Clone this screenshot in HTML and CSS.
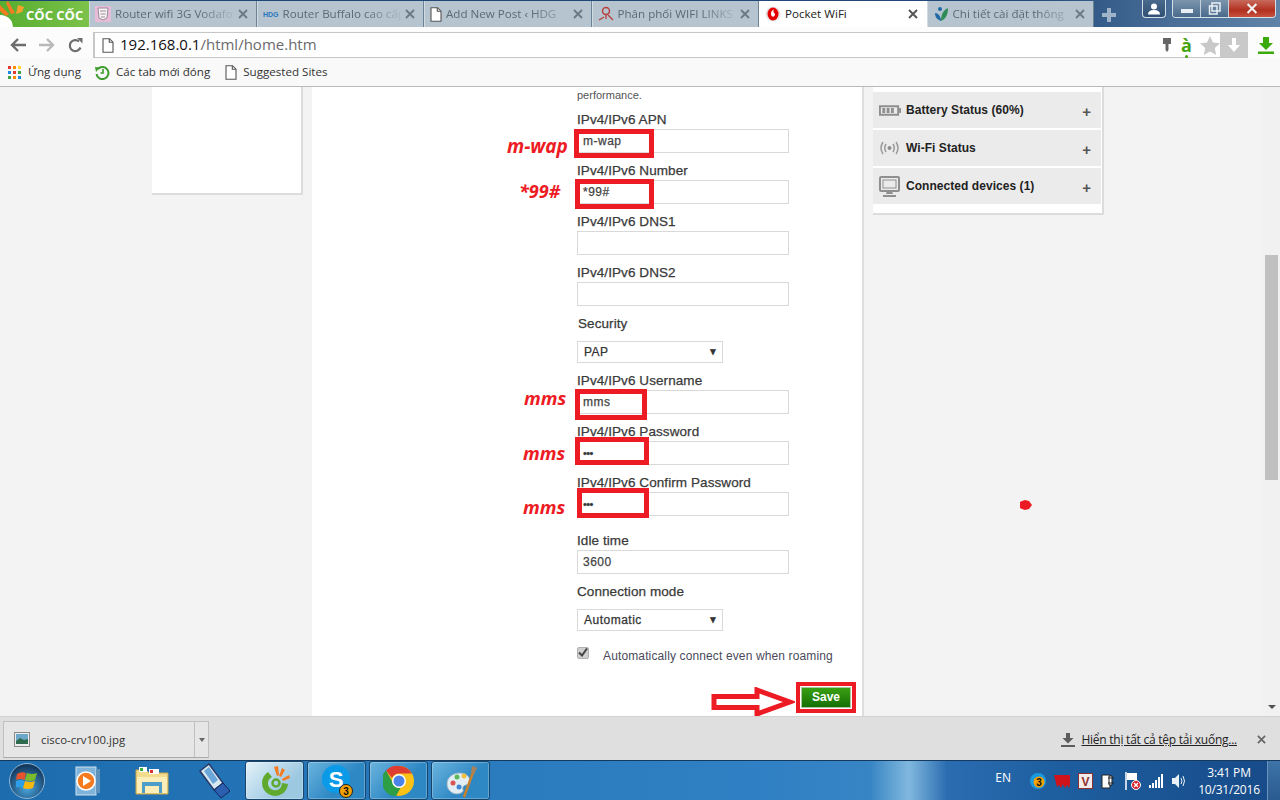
FILE: index.html
```html
<!DOCTYPE html>
<html lang="vi">
<head>
<meta charset="utf-8">
<title>Pocket WiFi</title>
<link rel="stylesheet" href="styles.css">
</head>
<body>
<svg class="defs" width="0" height="0" aria-hidden="true">
  <symbol id="x" viewBox="0 0 10 10"><path d="M1 1l8 8M9 1l-8 8" stroke="currentColor" stroke-width="1.900" fill="none"/></symbol>
  <symbol id="doc" viewBox="0 0 12 15"><path d="M1 .7h6.500L11 4.200v10.100H1z" fill="#fff" stroke="#555" stroke-width="1.100"/><path d="M7.300.7v3.600H11" fill="none" stroke="#555" stroke-width="1.100"/></symbol>
</svg>

<div class="app">
  <header class="titlebar">
    <div class="logo">
      <svg width="24" height="27" viewBox="0 0 24 27"><path d="M0 27V15C5 15 9 17 12 22l1 5z" fill="#fff"/><path d="M0 5l9 9-3 2L0 11z" fill="#f47b20"/><path d="M8 1l7 12-4 1L6 3z" fill="#f47b20"/><path d="M18 5l-2 9 6 -2 2-5z" fill="#f9a02a"/></svg>
      <span class="logo-text">CỐC CỐC</span>
    </div>
    <div class="tab">
      <svg class="fav" width="16" height="16" viewBox="0 0 16 16"><rect width="16" height="16" fill="#e8bcd8"/><path d="M3 2h10l-1 10-4 2-4-2z" fill="#f8f4f6" stroke="#9a8a96"/><path d="M5 5h6M5.500 8h5M6 11h4" stroke="#9a8a96"/></svg>
      <span class="tab-title">Router wifi 3G Vodafo</span>
      <svg class="close" width="10" height="10"><use href="#x"/></svg>
    </div>
    <div class="tab">
      <svg class="fav" width="16" height="16" viewBox="0 0 16 16"><text x="0" y="11" class="hdg">HDG</text></svg>
      <span class="tab-title">Router Buffalo cao cấp</span>
      <svg class="close" width="10" height="10"><use href="#x"/></svg>
    </div>
    <div class="tab">
      <svg class="fav" width="12" height="15"><use href="#doc"/></svg>
      <span class="tab-title">Add New Post ‹ HDG</span>
      <svg class="close" width="10" height="10"><use href="#x"/></svg>
    </div>
    <div class="tab">
      <svg class="fav" width="16" height="16" viewBox="0 0 16 16"><circle cx="8" cy="5" r="3.500" fill="none" stroke="#b8413f" stroke-width="1.500"/><path d="M8 8v5M1 14l5-3M10 9l5 5" stroke="#b8413f" stroke-width="1.300"/></svg>
      <span class="tab-title">Phân phối WIFI LINKS</span>
      <svg class="close" width="10" height="10"><use href="#x"/></svg>
    </div>
    <div class="tab tab-active">
      <svg class="fav" width="16" height="16" viewBox="0 0 16 16"><circle cx="8" cy="8" r="7.500" fill="#e4e4e4"/><ellipse cx="8" cy="8" rx="5.500" ry="6.500" fill="#e60000"/><path d="M9 3.500c-2 .6-3 2.300-3 4.200 0 1.800 1 3 2 3s2-1 2-2.200c0-1.300-1.200-1.800-1.600-2.500C8.300 5 8.600 4.200 9 3.500z" fill="#fff"/></svg>
      <span class="tab-title">Pocket WiFi</span>
      <svg class="close" width="10" height="10"><use href="#x"/></svg>
    </div>
    <div class="tab">
      <svg class="fav" width="16" height="16" viewBox="0 0 16 16"><path d="M8 15C3 13 2 10 2 7c3 0 6 3 6 8z" fill="#1f6aa5"/><path d="M8 15c0-6 2-11 7-13 0 6-2 11-7 13z" fill="#2e8b57"/><circle cx="7" cy="3" r="2" fill="#1f6aa5"/></svg>
      <span class="tab-title">Chi tiết cài đặt thông</span>
      <svg class="close" width="10" height="10"><use href="#x"/></svg>
    </div>
    <svg class="newtab" width="18" height="18" viewBox="0 0 18 18"><path d="M9 2v14M2 9h14" stroke="#9fb4c8" stroke-width="4"/></svg>
    <div class="winctl">
      <div class="winbtn-user">
        <svg width="14" height="12" viewBox="0 0 14 12"><circle cx="7" cy="3.500" r="3" fill="#fff"/><path d="M1 11.500c0-3 2-4.500 6-4.500s6 1.500 6 4.500z" fill="#fff"/></svg>
      </div>
      <div class="wingroup">
        <div class="winbtn-min"><span class="min-bar"></span></div>
        <div class="winbtn-max"><svg width="13" height="13" viewBox="0 0 13 13"><path d="M4 1h8v8h-8zM1.500 4h7.500v8h-7.500z" fill="none" stroke="#e8eef4" stroke-width="1.500"/></svg></div>
        <div class="winbtn-close"><svg width="16" height="11"><use href="#x" /></svg></div>
      </div>
    </div>
  </header>

  <nav class="toolbar">
    <svg class="nav-icon" width="16" height="14" viewBox="0 0 16 14"><path d="M8 1L2 7l6 6M2 7h14" stroke="#6d6d6d" stroke-width="2.400" fill="none"/></svg>
    <svg class="nav-icon" width="16" height="14" viewBox="0 0 16 14"><path d="M8 1l6 6-6 6M14 7H0" stroke="#b9b9b9" stroke-width="2.400" fill="none"/></svg>
    <svg class="nav-icon nav-reload" width="15" height="15" viewBox="0 0 15 15"><path d="M12.500 9.500A5.500 5.500 0 1 1 11 3.500" stroke="#6d6d6d" stroke-width="2.200" fill="none"/><path d="M9 0h5.500v5.500z" fill="#6d6d6d"/></svg>
    <div class="omnibox">
      <svg class="url-doc" width="12" height="15"><use href="#doc"/></svg>
      <span class="url"><b class="url-host">192.168.0.1</b>/html/home.htm</span>
      <svg class="o-key" width="10" height="16" viewBox="0 0 10 16"><path d="M1 1h8v6H6.500v6L5 15l-1.500-2V7H1z" fill="#666"/></svg>
      <span class="o-a">à<i class="o-dot"></i></span>
      <svg class="o-star" width="20" height="19" viewBox="0 0 20 19"><path d="M10 0l3 6.500 7 .8-5.200 4.800L16.200 19 10 15.500 3.800 19l1.400-6.900L0 7.300l7-.8z" fill="#c9c9c9"/></svg>
      <div class="o-down"><svg width="12" height="14" viewBox="0 0 12 14"><path d="M4 0h4v7h4l-6 7-6-7h4z" fill="#fff"/></svg></div>
    </div>
    <svg class="dl-green" width="16" height="17" viewBox="0 0 16 17"><path d="M5 0h6v6h4l-7 7-7-7h4z" fill="#3aaa0a"/><rect y="14.500" width="16" height="2.500" fill="#3aaa0a"/></svg>
  </nav>

  <div class="bookmarks">
    <span class="bm bm-apps">
      <svg width="13" height="13" viewBox="0 0 13 13"><g><rect width="3" height="3" fill="#e53935"/><rect x="5" width="3" height="3" fill="#fb8c00"/><rect x="10" width="3" height="3" fill="#fdd835"/><rect y="5" width="3" height="3" fill="#1e88e5"/><rect x="5" y="5" width="3" height="3" fill="#e53935"/><rect x="10" y="5" width="3" height="3" fill="#43a047"/><rect y="10" width="3" height="3" fill="#43a047"/><rect x="5" y="10" width="3" height="3" fill="#fb8c00"/><rect x="10" y="10" width="3" height="3" fill="#1e88e5"/></g></svg>
      Ứng dụng
    </span>
    <span class="bm bm-recent">
      <svg width="15" height="15" viewBox="0 0 15 15"><path d="M3 4a6 6 0 1 1-1.500 5" stroke="#3f9a2e" stroke-width="2" fill="none"/><path d="M0 2l5 .5L1 7z" fill="#3f9a2e"/><path d="M8 4v4H5.500" stroke="#3f9a2e" stroke-width="1.600" fill="none"/></svg>
      Các tab mới đóng
    </span>
    <span class="bm bm-sites">
      <svg width="12" height="15"><use href="#doc"/></svg>
      Suggested Sites
    </span>
  </div>

  <main class="viewport">
    <div class="page">
      <aside class="left-card"></aside>
      <section class="main-col">
        <p class="perf">performance.</p>
        <div class="field"><label class="lbl">IPv4/IPv6 APN</label><div class="input">m-wap</div></div>
        <div class="field"><label class="lbl">IPv4/IPv6 Number</label><div class="input">*99#</div></div>
        <div class="field"><label class="lbl">IPv4/IPv6 DNS1</label><div class="input"></div></div>
        <div class="field"><label class="lbl">IPv4/IPv6 DNS2</label><div class="input"></div></div>
        <div class="field field-select"><label class="lbl lbl-sec">Security</label><div class="select">PAP<span class="caret">▼</span></div></div>
        <div class="field"><label class="lbl">IPv4/IPv6 Username</label><div class="input">mms</div></div>
        <div class="field"><label class="lbl">IPv4/IPv6 Password</label><div class="input input-pw">•••</div></div>
        <div class="field field-confirm"><label class="lbl">IPv4/IPv6 Confirm Password</label><div class="input input-pw">•••</div></div>
        <div class="field"><label class="lbl">Idle time</label><div class="input">3600</div></div>
        <div class="field field-select"><label class="lbl">Connection mode</label><div class="select">Automatic<span class="caret">▼</span></div></div>
        <div class="check-row">
          <span class="check"><svg width="10" height="9" viewBox="0 0 10 9"><path d="M1 4.500l3 3 5-7" stroke="#444" stroke-width="2" fill="none"/></svg></span>
          <span class="check-text">Automatically connect even when roaming</span>
        </div>
        <div class="save-row"><button class="save">Save</button></div>
      </section>
      <aside class="right-card">
        <div class="acc">
          <span class="acc-ic"><svg width="22" height="11" viewBox="0 0 23 11"><path d="M1 1h19v9H1z" fill="none" stroke="#8f8f8f" stroke-width="2"/><rect x="21" y="3" width="2" height="5" fill="#8f8f8f"/><path d="M3.500 3h3v5h-3zM8 3h3v5H8zM12.500 3h3v5h-3z" fill="#8f8f8f"/></svg></span>
          <span class="acc-title">Battery Status (60%)</span><span class="plus">+</span>
        </div>
        <div class="acc">
          <span class="acc-ic"><svg width="21" height="16" viewBox="0 0 21 16"><circle cx="10.500" cy="8" r="2" fill="#8f8f8f"/><path d="M7 4Q4.500 8 7 12M14 4q2.500 4 0 8M4 2Q0 8 4 14M17 2q4 6 0 12" stroke="#9a9a9a" stroke-width="1.500" fill="none"/></svg></span>
          <span class="acc-title">Wi-Fi Status</span><span class="plus">+</span>
        </div>
        <div class="acc">
          <span class="acc-ic"><svg width="21" height="21" viewBox="0 0 21 21"><rect x="1" y="1" width="19" height="14" rx="1" fill="none" stroke="#8f8f8f" stroke-width="2"/><rect x="4" y="4" width="13" height="8" fill="none" stroke="#8f8f8f"/><path d="M8 15h5l1 3H7zM4 19h13v2H4z" fill="#8f8f8f"/></svg></span>
          <span class="acc-title">Connected devices (1)</span><span class="plus">+</span>
        </div>
      </aside>

      <div class="note box-1"></div>
      <div class="note box-2"></div>
      <div class="note box-3"></div>
      <div class="note box-4"></div>
      <div class="note box-5"></div>
      <div class="note box-save"></div>
      <span class="cap cap-1">m-wap</span>
      <span class="cap cap-2">*99#</span>
      <span class="cap cap-3">mms</span>
      <span class="cap cap-4">mms</span>
      <span class="cap cap-5">mms</span>
      <svg class="arrow" width="84" height="30" viewBox="0 0 84 30"><path d="M3 9.500H46V3L79 15 46 27V20.500H3z" fill="#fff" stroke="#ed1c24" stroke-width="5"/></svg>
      <svg class="dot" width="12" height="10" viewBox="0 0 12 10"><path d="M0 2l2-1 3-1 4 1 3 4-3 4-4 1-3-1-2-1z" fill="#ed1c24"/></svg>
    </div>
    <div class="scrollbar">
      <div class="thumb"></div>
      <span class="sb-down"></span>
    </div>
  </main>

  <div class="downloads">
    <div class="dl-item">
      <svg width="16" height="15" viewBox="0 0 16 15"><rect x=".5" y=".5" width="15" height="14" fill="#eee" stroke="#888"/><rect x="2" y="2" width="12" height="7" fill="#6aa7c8"/><path d="M2 9l4-3 4 2 4-1v5H2z" fill="#2f6b4f"/></svg>
      <span class="dl-name">cisco-crv100.jpg</span>
      <span class="dl-arrow"></span>
    </div>
    <svg class="dl-all-icon" width="14" height="14" viewBox="0 0 14 14"><path d="M5 0h4v5h3.500L7 10.500 1.500 5H5z" fill="#5c5c5c"/><rect y="12" width="14" height="2" fill="#5c5c5c"/></svg>
    <a class="dl-all">Hiển thị tất cả tệp tải xuống...</a>
    <svg class="dl-close" width="9" height="9"><use href="#x"/></svg>
  </div>

  <footer class="taskbar">
    <div class="orb">
      <svg width="22" height="22" viewBox="0 0 22 22"><path d="M1 4q4-3 9-1l-1.500 7Q4 8 0 10z" fill="#e8532b"/><path d="M11 3q5 2 10 0l-2 7q-5 2-10 0z" fill="#7cbb2d"/><path d="M0 11q4-2 8.500 0L7 18q-4-2-8 0z" fill="#2d9fe8"/><path d="M9 11q5 2 10 0l-2 7q-5 2-10 0z" fill="#f6b80f"/></svg>
    </div>
    <div class="qlaunch ql-media">
      <svg width="26" height="30" viewBox="0 0 26 30"><rect x="1" y="1" width="20" height="28" fill="#7fb3da" stroke="#cfe2f0"/><rect x="21" y="3" width="4" height="24" fill="#5d92bd"/><circle cx="11" cy="15" r="9" fill="#f47b20" stroke="#fff" stroke-width="1.500"/><path d="M8 10l8 5-8 5z" fill="#fff"/></svg>
    </div>
    <div class="qlaunch ql-folder">
      <svg width="34" height="30" viewBox="0 0 34 30"><path d="M1 4h10l3 3h19v21H1z" fill="#f4dc8e" stroke="#c9a64a"/><rect x="4" y="1" width="8" height="5" fill="#fff"/><rect x="5" y="2" width="3" height="3" fill="#3cae3c"/><rect x="14" y="3" width="10" height="5" fill="#fff"/><rect x="15" y="4" width="3" height="3" fill="#d33"/><rect x="2" y="11" width="30" height="16" fill="#fbeeb8"/><rect x="7" y="16" width="20" height="4" fill="#4d9ec9"/><path d="M7 20h3v7H7zM24 20h3v7h-3z" fill="#4d9ec9"/></svg>
    </div>
    <div class="qlaunch ql-usb">
      <svg width="32" height="36" viewBox="0 0 32 36"><path d="M1 8l9-7 14 19-9 7z" fill="#d8e8f0" stroke="#2a3a66" stroke-width="1.500"/><path d="M5 8l5-4 9 13-5 4z" fill="#6aa7d8"/><path d="M15 27l9-7 7 8-9 7z" fill="#2c5fb0" stroke="#14275e"/></svg>
    </div>
    <div class="pin pin-active">
      <svg width="32" height="32" viewBox="0 0 32 32"><path d="M9 7A13 13 0 1 0 29 19l-6-1A7 7 0 1 1 13 12z" fill="#5fa92f"/><circle cx="17" cy="18" r="3.500" fill="none" stroke="#5fa92f" stroke-width="2.500"/><path d="M15 2l3 9 2-1-1-9zM23 3l-3 8 2 1 4-7zM30 10l-7 4 1 2 7-3z" fill="#f47b20"/></svg>
    </div>
    <div class="pin">
      <svg width="32" height="34" viewBox="0 0 32 34"><circle cx="15" cy="15" r="14" fill="#0a9ae8"/><text x="15" y="23" class="skype">S</text><circle cx="25" cy="27" r="6.500" fill="#f5a100" stroke="#222"/><text x="25" y="31" class="skype-n">3</text></svg>
    </div>
    <div class="pin">
      <svg width="32" height="32" viewBox="0 0 32 32"><circle cx="16" cy="16" r="15" fill="#fbc116"/><path d="M16 1a15 15 0 0 1 13 7.500H16a7.500 7.500 0 0 0-7 4.500L3 5.500A15 15 0 0 1 16 1z" fill="#de3d31"/><path d="M3 5.500L9.500 17a7.500 7.500 0 0 0 8 6L13 31A15 15 0 0 1 3 5.500z" fill="#2c9e46"/><circle cx="16" cy="16" r="7" fill="#fff"/><circle cx="16" cy="16" r="5.500" fill="#4b83e8"/></svg>
    </div>
    <div class="pin">
      <svg width="34" height="34" viewBox="0 0 34 34"><path d="M3 20c0-7 6-11 13-11 6 0 10 4 10 8 0 5-6 3-7 6s2 4-2 6C10 32 3 27 3 20z" fill="#e3eef4" stroke="#9ab4c4"/><circle cx="9" cy="19" r="2.500" fill="#d9534f"/><circle cx="13" cy="13" r="2.500" fill="#5cb85c"/><circle cx="20" cy="12" r="2.500" fill="#f0c040"/><circle cx="15" cy="23" r="2.500" fill="#3f87d4"/><path d="M31 3L20 33" stroke="#c9812b" stroke-width="2.500"/><path d="M28 2l5 2-3 6-3-2z" fill="#a9825a"/></svg>
    </div>
    <div class="tray">
      <span class="tray-lang">EN</span>
      <svg width="16" height="16" viewBox="0 0 16 16"><circle cx="8" cy="8" r="8" fill="#1a9ae0"/><circle cx="9" cy="9" r="5.500" fill="#f5a100"/><text x="9" y="12.500" class="skype-n">3</text></svg>
      <svg width="16" height="16" viewBox="0 0 16 16"><path d="M0 2h16v9l-1 4-2-3-2 3-2-4-2 4-2-3-2 2z" fill="#d0121a"/></svg>
      <svg width="15" height="16" viewBox="0 0 15 16"><rect width="15" height="16" fill="#8f3030"/><rect x="1" y="1" width="13" height="14" fill="#f2ecec"/><text x="7.500" y="13" class="tray-v">V</text></svg>
      <svg width="14" height="17" viewBox="0 0 14 17"><path d="M1 3h8v13H1z" fill="#fff" stroke="#222"/><path d="M7 6h6M7 11h6M8 4h3v9H8z" fill="#fff" stroke="#222"/></svg>
      <svg class="tray-flag" width="16" height="18" viewBox="0 0 16 18"><path d="M1 0v18" stroke="#fff" stroke-width="1.500"/><path d="M2 1h10v7H2z" fill="#fff"/><circle cx="11" cy="13" r="4.500" fill="#d9202a" stroke="#fff"/><path d="M9 11l4 4M13 11l-4 4" stroke="#fff" stroke-width="1.400"/></svg>
      <svg width="15" height="14" viewBox="0 0 15 14"><path d="M0 11h2v3H0zM3 9h2v5H3zM6 6h2v8H6zM9 3h2v11H9zM12 0h2v14h-2z" fill="#fff"/></svg>
      <svg width="14" height="16" viewBox="0 0 14 16"><path d="M0 5h3l4-4v14l-4-4H0z" fill="#eaf2f8"/><path d="M9 5q2 3 0 6M11 3q3 5 0 10" stroke="#eaf2f8" fill="none"/></svg>
      <div class="clock"><span>3:41 PM</span><span>10/31/2016</span></div>
      <span class="show-desktop"></span>
    </div>
  </footer>
</div>
</body>
</html>
```

FILE: styles.css
```css
* { box-sizing: border-box; }
html, body { margin: 0; height: 100%; overflow: hidden; }
body { font-family: "Liberation Sans", Arial, sans-serif; color: #333; background: #f3f3f3; }
.defs { position: absolute; }
.app { width: 1280px; height: 800px; display: flex; flex-direction: column; }

/* title bar */
.titlebar {
  height: 27px; flex: none; display: flex; align-items: flex-end; padding-top: 1px;
  background: linear-gradient(90deg, #1e4474 0%, #21497b 80%, #4a6f98 92%, #5f83a8 100%);
  color: #5d6a74;
}
.logo {
  width: 89px; height: 26px; display: flex; align-items: flex-end; overflow: hidden;
  background: linear-gradient(90deg, #55ad30, #7cc24a);
}
.logo svg { flex: none; }
.logo-text { font: 700 13px/24px "Open Sans", sans-serif; color: #fff; margin-left: 2px; white-space: nowrap; }
.tab {
  width: 167.500px; height: 26px; flex: none; display: flex; align-items: center; gap: 4px;
  padding: 0 8px 0 5px; background: #b5c4ce;
  border-right: 1px solid #6e8296; border-left: 1px solid #d0dbe2;
}
.tab-active { background: #fff; color: #222; border-color: #fff; }
.fav { flex: none; }
.hdg { font: 700 7px "Liberation Sans", sans-serif; fill: #2a78c0; }
.tab-title {
  flex: 1; min-width: 0; white-space: nowrap; font: 11.600px/16px "Open Sans", sans-serif;
  -webkit-mask-image: linear-gradient(90deg, #000 70%, rgba(0,0,0,.1));
  mask-image: linear-gradient(90deg, #000 70%, rgba(0,0,0,.1));
}
.tab-active .tab-title { -webkit-mask-image: none; mask-image: none; }
.close { flex: none; color: #6c7a84; }
.tab-active .close { color: #555; }
.newtab { flex: none; margin: 0 0 3px 6px; }
.winctl { margin-left: auto; align-self: flex-start; display: flex; gap: 6px; margin-right: 4px; margin-top: -1px; }
.winbtn-user, .wingroup { height: 18px; border: 1px solid #d5dfe8; border-top: 0; border-radius: 0 0 4px 4px; display: flex; }
.winbtn-user { width: 24px; background: linear-gradient(#4a6a8c, #2f4f74); align-items: center; justify-content: center; }
.wingroup { width: 104px; overflow: hidden; }
.winbtn-min, .winbtn-max { width: 28px; background: linear-gradient(#7c95ad, #4a6a8c); display: flex; align-items: center; justify-content: center; border-right: 1px solid #c6d2dc; }
.min-bar { width: 12px; height: 4px; margin-top: 5px; background: #e8eef4; }
.winbtn-close { flex: 1; background: linear-gradient(#c86a5c, #b23020 60%, #c65240); color: #f2f2f2; display: flex; align-items: center; justify-content: center; }

/* toolbar */
.toolbar { height: 31px; flex: none; display: flex; align-items: center; background: #fcfcfc; padding: 5px 0 0 10px; }
.nav-icon { flex: none; margin-right: 13px; }
.nav-reload { margin-right: 11px; }
.omnibox {
  width: 1155px; height: 26px; margin-left: -1px; display: flex; align-items: center;
  background: #fff; border: 1px solid #c6c6c6; border-right: 0; border-left-width: 2px; padding-left: 7px;
}
.url-doc { flex: none; }
.url { margin: 0 0 2px 6px; font: 15px/20px "Open Sans", sans-serif; color: #6b6b6b; }
.url-host { font-weight: 400; color: #111; }
.o-key { margin-left: auto; }
.o-a { position: relative; margin-left: 9px; font: 700 18px/20px "Open Sans", sans-serif; color: #46a30f; width: 13px; }
.o-dot { position: absolute; left: 4px; bottom: -3px; width: 3px; height: 3px; background: #46a30f; border-radius: 50%; }
.o-star { margin-left: 6px; }
.o-down { width: 28px; height: 24px; background: #c9c9c9; display: flex; align-items: center; justify-content: center; }
.dl-green { margin-left: 10px; flex: none; }

/* bookmarks */
.bookmarks {
  height: 29px; flex: none; display: flex; align-items: center; background: #f9f9f9;
  border-bottom: 1px solid #b9b9b9; font: 11.600px/16px "Open Sans", sans-serif; color: #333;
}
.bm { display: flex; align-items: center; gap: 7px; white-space: nowrap; }
.bm-apps { margin-left: 8px; }
.bm-recent { margin-left: 14px; gap: 6px; }
.bm-sites { margin-left: 15px; gap: 6px; }

/* viewport */
.viewport { height: 629px; flex: none; display: flex; background: #f3f3f3; overflow: hidden; }
.page { position: relative; flex: 1; display: flex; align-items: flex-start; padding-left: 152px; }
.left-card { width: 151px; height: 108px; background: #fff; border-right: 2px solid #dcdcdc; border-bottom: 2px solid #dcdcdc; flex: none; }
.main-col {
  width: 552px; height: 629px; margin-left: 9px; padding: 0 11px 0 265px; flex: none;
  background: #fff; border-right: 2px solid #dedede;
}
.perf { margin: 0 0 6px; font-size: 11px; line-height: 17px; color: #555; }
.field { height: 51px; }
.field-select { height: 57px; }
.field-confirm { height: 58px; }
.lbl {
  display: block; height: 19px; font-size: 13.500px; line-height: 20px; color: #3a3a3a; white-space: nowrap;
  letter-spacing: .08px; -webkit-text-stroke: .25px #3a3a3a;
}
.lbl-sec { margin-left: 1px; }
.input {
  width: 212px; height: 24px; padding-left: 5px; background: #fff; border: 1px solid #d9d9d9;
  font-size: 12px; line-height: 23px; color: #444; letter-spacing: .5px; -webkit-text-stroke: .25px #444;
}
.input-pw { font-size: 11px; letter-spacing: -.6px; color: #333; }
.select {
  position: relative; width: 146px; height: 22px; margin-top: 8px; padding-left: 6px;
  border: 1px solid #d9d9d9; font-size: 12px; line-height: 20px; color: #333; letter-spacing: .5px; -webkit-text-stroke: .25px #333;
}
.caret { position: absolute; right: 4px; top: 0; font-size: 10px; color: #333; letter-spacing: 0; }
.check-row { display: flex; align-items: center; height: 18px; margin-top: 6px; }
.check {
  width: 12px; height: 12px; margin-top: -3px; background: #d0d0d0; border: 1px solid #b0b0b0; border-radius: 2px;
  display: flex; align-items: center; justify-content: center; flex: none;
}
.check-text { margin: 3px 0 0 14px; font-size: 12px; letter-spacing: .13px; color: #4a4a5a; white-space: nowrap; }
.save-row { display: flex; justify-content: flex-end; margin-top: 24px; margin-left: -100px; }
.save {
  width: 50px; height: 21px; padding: 0; border: 1px solid #a8c8a0; background: linear-gradient(#3aa012, #156f05);
  font: 700 12px/19px "Liberation Sans", sans-serif; color: #fff;
}
.right-card {
  width: 231px; height: 128px; margin-left: 9px; padding: 5px 1px 0 0; flex: none;
  background: #fff; border-right: 2px solid #dcdcdc; border-bottom: 2px solid #dcdcdc;
}
.acc {
  height: 36px; margin-bottom: 2px; padding: 0 10px 0 6px; display: flex; align-items: center;
  background: #ebebeb; position: relative;
}
.acc-ic { width: 27px; flex: none; display: flex; align-items: center; }
.acc-title { font-size: 12px; font-weight: 700; color: #222; white-space: nowrap; letter-spacing: .05px; }
.plus { margin-left: auto; font: 700 15px/15px "Liberation Sans", sans-serif; color: #555; margin-top: 3px; }

/* overlay annotations */
.note { position: absolute; border: 5px solid #ed1c24; }
.box-1 { left: 574px; top: 42px; width: 80px; height: 29px; }
.box-2 { left: 575px; top: 92px; width: 79px; height: 30px; }
.box-3 { left: 575px; top: 302px; width: 72px; height: 31px; }
.box-4 { left: 575px; top: 350px; width: 74px; height: 28px; }
.box-5 { left: 577px; top: 401px; width: 72px; height: 30px; }
.box-save { left: 796px; top: 595px; width: 60px; height: 31px; border-width: 4.500px; }
.cap { position: absolute; font: italic 700 18.500px/22px "Open Sans", sans-serif; color: #ed1c24; white-space: nowrap; }
.cap-1 { left: 507px; top: 48px; font-size: 19px; }
.cap-2 { left: 519px; top: 93px; font-size: 18px; }
.cap-3 { left: 524px; top: 300px; }
.cap-4 { left: 523px; top: 355px; }
.cap-5 { left: 523px; top: 409px; }
.arrow { position: absolute; left: 711px; top: 600px; }
.dot { position: absolute; left: 1020px; top: 413px; }

/* scrollbar */
.scrollbar { position: relative; width: 17px; flex: none; background: #f1f1f1; }
.thumb { position: absolute; left: 2px; top: 168px; width: 13px; height: 225px; background: #c0c0c0; }
.sb-down { position: absolute; left: 5px; bottom: 7px; border: 4px solid transparent; border-top: 4px solid #505050; border-bottom: 0; }

/* downloads */
.downloads {
  height: 44px; flex: none; display: flex; align-items: center; background: #dfdfdf;
  border-top: 1px solid #d2d2d2; padding: 4px 0 2px 3px; font: 12px/16px "Open Sans", sans-serif; color: #333;
}
.dl-item {
  width: 206px; height: 37px; display: flex; align-items: center; padding-left: 10px;
  background: #e6e6e6; border: 1px solid #c0c0c0; border-bottom-color: #a8a8a8; position: relative;
}
.dl-name { margin-left: 11px; font-size: 11.400px; }
.dl-arrow { position: absolute; right: 0; top: 0; bottom: 0; width: 14px; border-left: 1px solid #c0c0c0; }
.dl-arrow::after { content: ""; position: absolute; left: 4px; top: 16px; border: 3px solid transparent; border-top: 4px solid #666; border-bottom: 0; }
.dl-all-icon { margin-left: auto; flex: none; }
.dl-all { margin-left: 6px; text-decoration: underline; color: #222; white-space: nowrap; letter-spacing: -.25px; }
.dl-close { margin: 0 14px 0 20px; color: #666; flex: none; }

/* taskbar */
.taskbar {
  height: 40px; flex: none; display: flex; align-items: center; color: #fff;
  border-top: 1px solid #143a60;
  background: linear-gradient(90deg, #1c6cae 0%, #2a7cbe 40%, #2f80c4 60%, #3885c4 68%, #80b8de 71%, #2a6cb0 74%, #1e5fa0 82%, #174a88 100%);
}
.orb {
  width: 36px; height: 36px; margin-left: 9px; flex: none; border-radius: 50%;
  background: radial-gradient(circle at 50% 70%, #4aa8e0, #14395f 75%); border: 1px solid #8fb6d4;
  display: flex; align-items: center; justify-content: center;
}
.qlaunch { flex: none; display: flex; justify-content: center; }
.ql-media { width: 26px; margin-left: 30px; }
.ql-folder { width: 34px; margin-left: 34px; }
.ql-usb { width: 32px; margin-left: 30px; }
.pin {
  width: 59px; height: 39px; flex: none; margin-left: 3px; display: flex; align-items: center; justify-content: center;
  border: 1px solid #16466e; border-radius: 3px; background: linear-gradient(135deg, #6bb4de, #2e88c4 60%);
  box-shadow: inset 0 0 0 1px rgba(255,255,255,.25);
}
.pin-active { margin-left: 14px; background: linear-gradient(135deg, #e4f2f8, #9cc8e2 70%); }
.skype { font: 700 22px "Liberation Sans", sans-serif; fill: #fff; text-anchor: middle; }
.skype-n { font: 700 10px "Liberation Sans", sans-serif; fill: #111; text-anchor: middle; }
.tray { margin-left: auto; display: flex; align-items: center; gap: 8px; height: 100%; }
.tray-lang { font: 12px/16px "Open Sans", sans-serif; margin-right: 11px; margin-top: -6px; }
.tray-flag { margin-left: 2px; }
.tray-v { font: 700 12px "Liberation Sans", sans-serif; fill: #8f3030; text-anchor: middle; }
.clock { display: flex; flex-direction: column; align-items: center; margin-left: 5px; width: 60px; font: 12px/17px "Open Sans", sans-serif; letter-spacing: -.2px; white-space: nowrap; }
.show-desktop { width: 13px; height: 100%; background: linear-gradient(#3e74a8, #2a5a90); border-left: 1px solid #6a94bc; }
```
